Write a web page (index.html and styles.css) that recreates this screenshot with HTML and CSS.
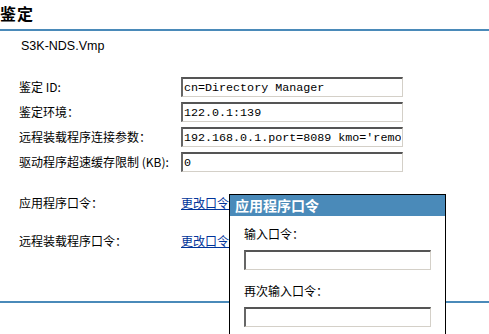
FILE: index.html
```html
<!DOCTYPE html>
<html lang="zh-CN">
<head>
  <meta charset="UTF-8">
  <title>鉴定</title>
  <link rel="stylesheet" href="styles.css">
</head>
<body>
  <div class="page">
    <h1 class="title">鉴定</h1>
    <div class="subtitle">S3K-NDS.Vmp</div>

    <div class="form">
      <label>鉴定 ID:</label>
      <input type="text" value="cn=Directory Manager">
      <label>鉴定环境：</label>
      <input type="text" value="122.0.1:139">
      <label>远程装载程序连接参数：</label>
      <input type="text" value="192.168.0.1.port=8089 kmo='remote loader'">
      <label>驱动程序超速缓存限制 (KB):</label>
      <input type="text" value="0">
    </div>

    <div class="pw-rows">
      <div class="pw-row">
        <span class="pw-label">应用程序口令：</span>
        <a href="#">更改口令</a>
      </div>
      <div class="pw-row">
        <span class="pw-label">远程装载程序口令：</span>
        <a href="#">更改口令</a>
      </div>
    </div>

    <div class="footer-line"></div>

    <!-- password popup -->
    <div class="popup">
      <div class="popup-head">应用程序口令</div>
      <div class="popup-body">
        <div class="popup-label first">输入口令：</div>
        <input type="password" class="popup-input">
        <div class="popup-label">再次输入口令：</div>
        <input type="password" class="popup-input">
      </div>
    </div>
  </div>
</body>
</html>
```

FILE: styles.css
```css
body {
  margin: 0;
  padding: 0;
  background: #fff;
  color: #000;
  font-family: "Noto Sans CJK SC", "Liberation Sans", sans-serif;
  font-size: 12px;
  overflow: hidden;
}

.page {
  position: relative;
  height: 334px;
}

.title {
  margin: 0;
  height: 29px;
  line-height: 26px;
  font-size: 16px;
  font-weight: bold;
  letter-spacing: 1px;
  border-bottom: 2px solid #4a8ab9;
}

.subtitle {
  padding-left: 21px;
  line-height: 30px;
  font-family: "Liberation Sans", sans-serif;
  font-size: 12.5px;
}

.form {
  display: grid;
  grid-template-columns: 162px 222px;
  row-gap: 5px;
  margin-top: 16px;
  padding-left: 19px;
  align-items: center;
}

.form label {
  line-height: 20px;
}

input {
  box-sizing: border-box;
  height: 20px;
  margin: 0;
  padding: 0 1px;
  border-style: solid;
  border-width: 2px 1px 1px 2px;
  border-color: #555 #d4d0c8 #d4d0c8 #666;
  background: #fff;
  font-family: "Liberation Mono", monospace;
  font-size: 11.7px;
  color: #000;
  outline: none;
}

.form input {
  width: 222px;
}

.pw-rows {
  display: flex;
  flex-direction: column;
  gap: 18px;
  margin-top: 21px;
  padding-left: 19px;
}

.pw-row {
  display: flex;
  line-height: 20px;
}

.pw-label {
  width: 162px;
}

.pw-row a {
  color: #003399;
  text-decoration: underline;
}

.footer-line {
  margin-top: 50px;
  height: 2px;
  background: #4a8ab9;
}

.popup {
  position: absolute;
  left: 229px;
  top: 194px;
  width: 215px;
  height: 150px;
  border: 1px solid #000;
  border-bottom: none;
  background: #fff;
}

.popup-head {
  height: 21px;
  line-height: 21px;
  padding-left: 5px;
  background: #4a8ab9;
  color: #fff;
  font-size: 14px;
  font-weight: bold;
}

.popup-body {
  padding: 0 14px;
}

.popup-label {
  line-height: 20px;
  margin-top: 11px;
  margin-bottom: 6px;
}

.popup-label.first {
  margin-top: 8px;
}

.popup-input {
  display: block;
  width: 187px;
}
```
